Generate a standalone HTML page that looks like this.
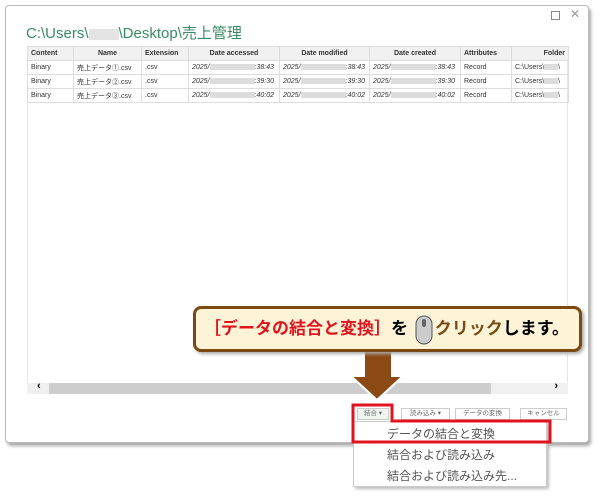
<!DOCTYPE html>
<html><head><meta charset="utf-8"><style>
*{margin:0;padding:0;box-sizing:border-box}
body{width:600px;height:497px;background:#fff;position:relative;overflow:hidden;font-family:"Liberation Sans","Noto Sans CJK JP",sans-serif}
.win{position:absolute;left:5px;top:5px;width:584px;height:438px;border:1px solid #bbb;border-radius:4px;box-shadow:2px 3px 3px #aaa;background:#fff}
.title{position:absolute;left:26px;top:22px;font-size:15px;color:#3a8a66}
table{position:absolute;left:27px;top:46px;border-collapse:collapse;font-size:7px;color:#333;table-layout:fixed}
td,th{border:1px solid #ddd;height:14px;padding:0 3px;white-space:nowrap;overflow:hidden}
th{background:#f1f1f1;font-weight:bold;text-align:center}
td.i{font-style:italic}
.blur{display:inline-block;width:45px;height:6px;background:#ddd;vertical-align:middle}
.area{position:absolute;left:27px;top:46px;width:541px;height:348px;border:1px solid #e6e6e6}
.sb{position:absolute;left:27px;top:383px;width:541px;height:11px;background:#f0f0f0}
.thumb{position:absolute;left:22px;top:0;width:442px;height:11px;background:#cdcdcd}
.btn{position:absolute;top:408px;height:12px;border:1px solid #ccc;font-size:6.5px;color:#666;text-align:center;line-height:10px;background:#fff}
.menu{position:absolute;left:353px;top:421px;width:194px;height:66px;background:#fff;border:1px solid #ccc;box-shadow:2px 2px 3px #bbb;font-size:12px;color:#555}
.menu div{position:absolute;left:33px}
.callout{position:absolute;left:193px;top:306px;width:389px;height:46px;background:#fdf4d8;border:3px solid #7a4a12;border-radius:8px;box-shadow:2px 2px 3px #aaa;font-size:17px;font-weight:bold;line-height:40px;padding-left:8px}
</style></head><body>
<div class="win">
<div style="position:absolute;right:28px;top:5px;width:9px;height:9px;border:1px solid #888"></div>
<div style="position:absolute;right:8px;top:1px;font-size:12px;color:#999">✕</div>
</div>
<div class="title">C:\Users\<span class="blur" style="width:30px;height:11px;background:#e4e4e4"></span>\Desktop\売上管理</div>
<div class="area"></div>
<table>
<colgroup><col style="width:46px"><col style="width:68px"><col style="width:47px"><col style="width:91px"><col style="width:90px"><col style="width:91px"><col style="width:51px"><col style="width:57px"></colgroup>
<tr><th style="text-align:left">Content</th><th>Name</th><th style="text-align:left">Extension</th><th>Date accessed</th><th>Date modified</th><th>Date created</th><th style="text-align:left">Attributes</th><th style="text-align:right">Folder</th></tr>
<tr><td>Binary</td><td>売上データ①.csv</td><td>.csv</td><td class="i">2025/<span class="blur"></span>:38:43</td><td class="i">2025/<span class="blur"></span>:38:43</td><td class="i">2025/<span class="blur"></span>:38:43</td><td>Record</td><td>C:\Users\<span class="blur" style="width:14px"></span>\</td></tr>
<tr><td>Binary</td><td>売上データ②.csv</td><td>.csv</td><td class="i">2025/<span class="blur"></span>:39:30</td><td class="i">2025/<span class="blur"></span>:39:30</td><td class="i">2025/<span class="blur"></span>:39:30</td><td>Record</td><td>C:\Users\<span class="blur" style="width:14px"></span>\</td></tr>
<tr><td>Binary</td><td>売上データ③.csv</td><td>.csv</td><td class="i">2025/<span class="blur"></span>:40:02</td><td class="i">2025/<span class="blur"></span>:40:02</td><td class="i">2025/<span class="blur"></span>:40:02</td><td>Record</td><td>C:\Users\<span class="blur" style="width:14px"></span>\</td></tr>
</table>
<div class="sb"><div class="thumb"></div><span style="position:absolute;left:10px;top:-3px;font-size:11px;font-weight:bold">‹</span><span style="position:absolute;right:10px;top:-3px;font-size:11px;font-weight:bold">›</span></div>
<div class="btn" style="left:357px;width:32px;background:#eef5ee">結合 ▾</div>
<div class="btn" style="left:401px;width:49px">読み込み ▾</div>
<div class="btn" style="left:455px;width:55px">データの変換</div>
<div class="btn" style="left:520px;width:47px">キャンセル</div>
<div class="menu">
<div style="top:3px">データの結合と変換</div>
<div style="top:24px">結合および読み込み</div>
<div style="top:45px">結合および読み込み先...</div>
</div>
<svg style="position:absolute;left:0;top:0" width="600" height="497">
<path d="M353 405 H392 V421 H550 V442 H353 Z" fill="none" stroke="#e0141e" stroke-width="3"/>
<path d="M364 350 H392 V376 H403 L377 400 L351 376 H364 Z" fill="#8b4a14" stroke="#fff" stroke-width="2"/>
</svg>
<div class="callout"><span style="color:#e0141e">［データの結合と変換］</span>を <svg width="18" height="30" style="vertical-align:middle;margin:0 2px"><rect x="1" y="1" width="16" height="28" rx="8" fill="#ccc" stroke="#555"/><rect x="7" y="4" width="4" height="8" rx="2" fill="#666"/></svg><span style="color:#7a4a12">クリック</span>します。</div>
</body></html>
